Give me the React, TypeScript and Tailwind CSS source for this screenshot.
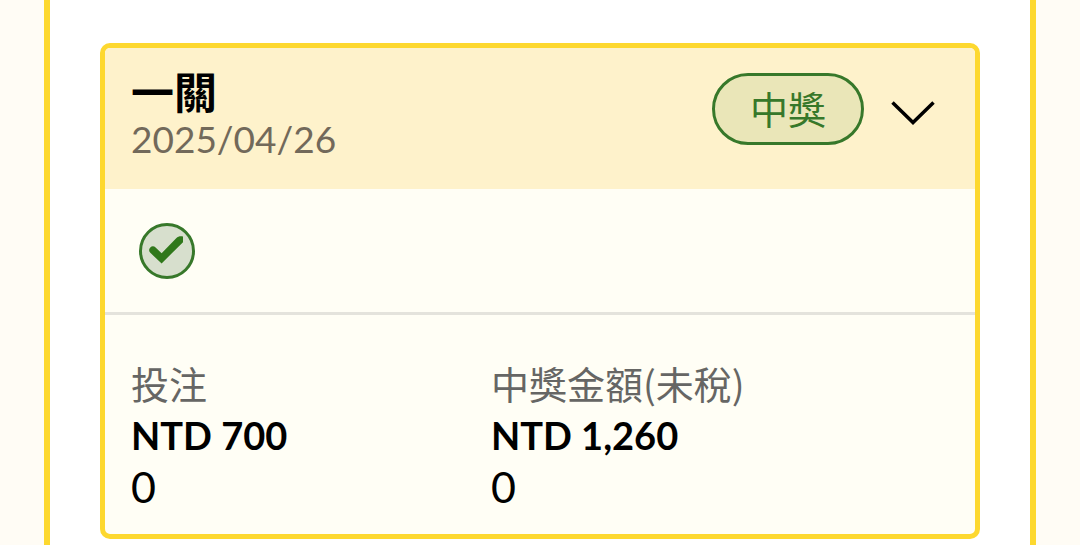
import { useState } from "react";

const bet = {
  title: "一關",
  date: "2025/04/26",
  status: "中獎",
  amounts: [
    { label: "投注", value: "NTD 700", points: "0" },
    { label: "中獎金額(未稅)", value: "NTD 1,260", points: "0" },
  ],
};

function WonIcon() {
  return (
    <svg
      width="56"
      height="56"
      viewBox="0 0 56 56"
      fill="none"
      role="img"
      aria-label={bet.status}
    >
      <circle cx="28" cy="28" r="26.5" fill="#d7dfcd" stroke="#37782a" strokeWidth="3" />
      <path
        d="M11.300 29.800c-1.700-1.800-1.500-4 0-5.400s3.800-1.400 5.300.1l6 5.700L37.200 15.200c2-1.900 4.300-2.400 6.800-1.700v5.700L22.600 40.400Z"
        fill="#30781b"
      />
    </svg>
  );
}

function ChevronIcon() {
  return (
    <svg width="46" height="26" viewBox="0 0 46 26" fill="none" aria-hidden="true">
      <path d="M2.500 2.500 23 22.500 43.500 2.500" stroke="#000" strokeWidth="3.500" />
    </svg>
  );
}

export default function App() {
  const [expanded, setExpanded] = useState(true);

  return (
    <main className="flex min-h-screen flex-col bg-[#fffcf5] px-11 font-['Lato','Noto_Sans_CJK_TC',sans-serif] text-black">
      <section className="flex-1 border-x-6 border-[#fdd82f] bg-white px-[50px] pt-[43px]">
        <article className="overflow-hidden rounded-[10px] border-5 border-[#fdd82f] bg-[#fffef5]">
          {/* Header */}
          <header className="flex items-start justify-between bg-[#fef2cb] px-[26px] pt-[25px] pb-[25px]">
            <div>
              <h2 className="text-[43px] leading-[40px] font-bold">{bet.title}</h2>
              <time dateTime="2025-04-26" className="block text-[37px] leading-[51px] text-[#72695a]">
                {bet.date}
              </time>
            </div>
            <div className="flex items-center gap-[26px] pr-[13px]">
              <span className="flex h-[72px] w-[152px] items-center justify-center rounded-full border-3 border-[#37782a] bg-[#eae6b8] text-[38px] leading-[51px] text-[#37782a]">
                {bet.status}
              </span>
              <button
                type="button"
                className="flex h-[72px] items-center pt-2"
                aria-label="展開"
                aria-expanded={expanded}
                onClick={() => setExpanded(!expanded)}
              >
                <ChevronIcon />
              </button>
            </div>
          </header>

          {/* Result */}
          <div className="border-b-3 border-[#e4e3dc] px-[34px] pt-[34px] pb-[33px]">
            <WonIcon />
          </div>

          {/* Amounts */}
          {expanded && (
            <dl className="grid grid-cols-[11fr_14fr] px-[26px] pt-11 pb-[22px]">
              {bet.amounts.map((amount) => (
                <div key={amount.label}>
                  <dt className="mb-1 font-['Noto_Sans_CJK_TC',sans-serif] text-[38px] leading-[47px] text-[#666664]">
                    {amount.label}
                  </dt>
                  <dd className="text-[38px] leading-[51px] font-bold">{amount.value}</dd>
                  <dd className="text-[43px] leading-[51px]">{amount.points}</dd>
                </div>
              ))}
            </dl>
          )}
        </article>
      </section>
    </main>
  );
}
